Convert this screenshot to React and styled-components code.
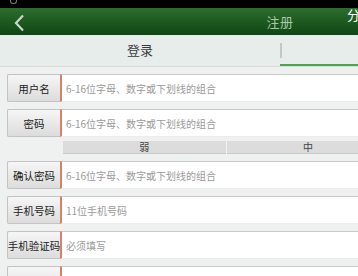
import styled, { createGlobalStyle } from "styled-components";

const GlobalStyle = createGlobalStyle`
  html, body {
    margin: 0;
    padding: 0;
    background: #eff1f0;
    overflow: hidden;
  }
  body {
    font-family: "Noto Sans CJK SC", "Noto Sans", sans-serif;
  }
`;

const fields = [
  { label: "用户名", hint: "6-16位字母、数字或下划线的组合" },
  { label: "密码", hint: "6-16位字母、数字或下划线的组合", strength: true },
  { label: "确认密码", hint: "6-16位字母、数字或下划线的组合" },
  { label: "手机号码", hint: "11位手机号码" },
  { label: "手机验证码", hint: "必须填写" },
  { label: "布号问题", hint: "必须填写" },
];

export default function App() {
  return (
    <>
      <GlobalStyle />
      <Page>
        <StatusBar>
          <StatusIcon />
        </StatusBar>
        <Header>
          <BackBtn>
            <svg width="12" height="18" viewBox="0 0 12 18">
              <path
                d="M10 1.5 L3 9 L10 16.5"
                fill="none"
                stroke="#c9d8c9"
                strokeWidth="2.2"
              />
            </svg>
          </BackBtn>
          <Title>注册</Title>
          <ShareBtn>分享</ShareBtn>
        </Header>
        <Tabs>
          <Tab>登录</Tab>
          <Tab $active>注册</Tab>
        </Tabs>
        <Form>
          {fields.map((f) => (
            <Group key={f.label}>
              <Row>
                <Label>{f.label}</Label>
                <Input placeholder={f.hint} />
              </Row>
              {f.strength ? (
                <Strength>
                  <Level>弱</Level>
                  <Level>中</Level>
                  <Level>强</Level>
                </Strength>
              ) : (
                ""
              )}
            </Group>
          ))}
        </Form>
      </Page>
    </>
  );
}

const Page = styled.div`
  width: 560px;
  height: 276px;
  overflow: hidden;
`;

const StatusBar = styled.div`
  height: 8px;
  background: #000;
  position: relative;
`;

const StatusIcon = styled.span`
  position: absolute;
  left: 10px;
  top: 0;
  width: 5px;
  height: 3px;
  border: 1px solid #777;
  border-top: none;
  border-radius: 0 0 3px 3px;
`;

const Header = styled.div`
  height: 27px;
  background: linear-gradient(#2c6d2d, #0f4614);
  display: flex;
  align-items: center;
  justify-content: center;
  position: relative;
`;

const BackBtn = styled.div`
  position: absolute;
  left: 13px;
  top: 5px;
  height: 18px;
`;

const Title = styled.div`
  color: #a9c7a9;
  font-size: 13px;
  letter-spacing: 0.5px;
`;

const ShareBtn = styled.div`
  position: absolute;
  left: 347px;
  top: -3px;
  color: #fff;
  font-size: 13px;
`;

const Tabs = styled.div`
  display: flex;
  height: 31px;
  background: #e7edeb;
  border-bottom: 1px solid #d7dcda;
`;

const Tab = styled.div`
  flex: 1;
  display: flex;
  align-items: center;
  justify-content: center;
  font-size: 13px;
  color: #3a3a3a;
  position: relative;
  border-bottom: 2px solid ${(p) => (p.$active ? "#4aa74c" : "transparent")};
  ${(p) =>
    p.$active
      ? `
    &::before {
      content: "";
      position: absolute;
      left: 0;
      top: 8px;
      height: 15px;
      width: 2px;
      background: #c3c7c5;
    }
  `
      : ""}
`;

const Form = styled.div`
  padding: 7px 7px 0 7px;
  display: flex;
  flex-direction: column;
  gap: 7px;
`;

const Group = styled.div`
  display: flex;
  flex-direction: column;
  gap: 4px;
`;

const Row = styled.div`
  display: flex;
  height: 28px;
`;

const Label = styled.div`
  width: 53px;
  box-sizing: border-box;
  flex-shrink: 0;
  display: flex;
  align-items: center;
  justify-content: center;
  font-size: 10.5px;
  color: #222;
  white-space: nowrap;
  background: linear-gradient(#f6f6f6, #dcdcdc);
  border: 1px solid #c3c3c3;
  border-right: none;
  border-radius: 2px 0 0 2px;
`;

const Input = styled.input`
  flex: 1;
  min-width: 0;
  box-sizing: border-box;
  border: none;
  border-left: 2px solid #d98166;
  border-top: 1px solid #c9c9c9;
  border-bottom: 1px solid #ececec;
  background: #fff;
  padding: 0 0 0 4px;
  font-family: "Noto Sans CJK SC", "Noto Sans", sans-serif;
  font-size: 10px;
  outline: none;
  &::placeholder {
    color: #9a9a9a;
  }
`;

const Strength = styled.div`
  display: grid;
  grid-template-columns: repeat(3, 1fr);
  gap: 1px;
  margin-left: 56px;
  height: 13px;
`;

const Level = styled.div`
  background: #dcdcdc;
  border-bottom: 1px solid #c8c8c8;
  display: flex;
  align-items: center;
  justify-content: center;
  font-size: 10px;
  color: #444;
  line-height: 1;
`;
